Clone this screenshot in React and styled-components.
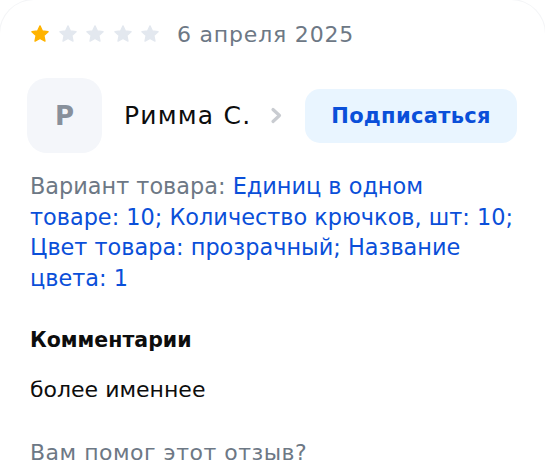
import React from 'react';
import styled, { createGlobalStyle } from 'styled-components';

const GlobalStyle = createGlobalStyle`
  html, body {
    margin: 0;
    padding: 0;
    background: #ffffff;
  }
  body {
    font-family: "DejaVu Sans", "Noto Sans", sans-serif;
    -webkit-font-smoothing: antialiased;
  }
`;

const Card = styled.div`
  width: 545px;
  height: 471px;
  box-sizing: border-box;
  padding: 20px 22px 0 30px;
  background: #fff;
  border-radius: 34px 34px 0 0;
  box-shadow: 0 0 0 1px #f4f5f7;
  overflow: hidden;
`;

const RatingRow = styled.div`
  display: flex;
  align-items: center;
  height: 28px;
`;

const Stars = styled.div`
  display: flex;
  gap: 7.5px;
  margin-right: 17px;
`;

const DateText = styled.span`
  font-size: 22px;
  letter-spacing: 0.8px;
  color: #6d7885;
`;

const AuthorRow = styled.div`
  display: flex;
  align-items: center;
  margin: 30px 0 0 -3px;
`;

const Avatar = styled.div`
  width: 75px;
  height: 75px;
  border-radius: 20px;
  background: #f4f6fa;
  color: #88909b;
  font-size: 26px;
  font-weight: 700;
  display: flex;
  align-items: center;
  justify-content: center;
  flex-shrink: 0;
`;

const Name = styled.span`
  margin-left: 22px;
  font-size: 25px;
  letter-spacing: 1.2px;
  color: #0d0d0d;
`;

const Chevron = styled.span`
  display: flex;
  margin-left: 19px;
`;

const SubscribeButton = styled.button`
  margin-left: auto;
  margin-right: 6px;
  width: 212px;
  height: 54px;
  border: none;
  border-radius: 15px;
  background: #e9f5ff;
  color: #0a4fd9;
  font-family: inherit;
  font-size: 21px;
  letter-spacing: 0.3px;
  font-weight: 700;
  cursor: pointer;
`;

const Variant = styled.p`
  margin: 18px 0 0;
  max-width: 486px;
  font-size: 22.4px;
  line-height: 30.5px;
  color: #6d7885;
`;

const Accent = styled.span`
  color: #0a4fd9;
`;

const Heading = styled.h3`
  margin: 32px 0 0;
  font-size: 20.5px;
  font-weight: 700;
  color: #0d0d0d;
  line-height: 30px;
`;

const Comment = styled.p`
  margin: 20px 0 0;
  font-size: 22px;
  color: #0d0d0d;
  line-height: 30px;
`;

const Helpful = styled.p`
  margin: 33px 0 0;
  font-size: 22px;
  letter-spacing: 0.5px;
  color: #6d7885;
  line-height: 30px;
`;

const Star = ({ filled }) => (
  <svg width="20" height="20" viewBox="0 0 24 24">
    <path
      d="M12 2.2l2.9 6.2 6.8.8-5 4.7 1.3 6.7L12 17.3l-6 3.3 1.3-6.7-5-4.7 6.8-.8z"
      fill={filled ? '#ffb300' : '#e3e8ef'}
      stroke={filled ? '#ffb300' : '#e3e8ef'}
      strokeWidth="1.6"
      strokeLinejoin="round"
    />
  </svg>
);

export default function App() {
  const rating = 1;
  return (
    <>
      <GlobalStyle />
      <Card>
        <RatingRow>
          <Stars>
            {[1, 2, 3, 4, 5].map((i) => (
              <Star key={i} filled={i <= rating} />
            ))}
          </Stars>
          <DateText>6 апреля 2025</DateText>
        </RatingRow>

        <AuthorRow>
          <Avatar>Р</Avatar>
          <Name>Римма С.</Name>
          <Chevron>
            <svg width="13" height="17" viewBox="0 0 13 17">
              <path d="M3 2.5l6.5 6-6.5 6" fill="none" stroke="#c9ccd1" strokeWidth="3.2" strokeLinecap="round" strokeLinejoin="round" />
            </svg>
          </Chevron>
          <SubscribeButton>Подписаться</SubscribeButton>
        </AuthorRow>

        <Variant>
          Вариант товара:{' '}
          <Accent>
            Единиц в одном товаре: 10; Количество крючков, шт: 10; Цвет товара: прозрачный; Название цвета: 1
          </Accent>
        </Variant>

        <Heading>Комментарии</Heading>
        <Comment>более именнее</Comment>
        <Helpful>Вам помог этот отзыв?</Helpful>
      </Card>
    </>
  );
}
